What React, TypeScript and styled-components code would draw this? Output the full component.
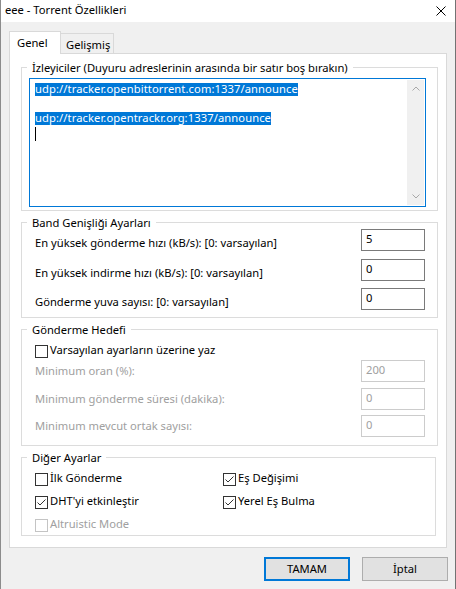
import React from "react";
import styled, { createGlobalStyle, css } from "styled-components";

const FONT = `"Noto Sans", "Open Sans", sans-serif`;

const GlobalStyle = createGlobalStyle`
  * { box-sizing: border-box; }
  html, body { margin: 0; padding: 0; background: #f0f0f0; }
  body { font-family: ${FONT}; font-size: 11.2px; color: #000; }
`;

const Window = styled.div`
  width: 456px;
  height: 589px;
  display: flex;
  flex-direction: column;
  background: #f0f0f0;
  border-left: 1px solid #8c8c8c;
  border-right: 1px solid #737373;
  overflow: hidden;
`;

const TitleBar = styled.div`
  height: 22px;
  flex: none;
  background: #fff;
  display: flex;
  align-items: flex-start;
  justify-content: space-between;
  padding: 2px 9px 0 4px;
`;

const Title = styled.div`
  line-height: 15px;
  white-space: nowrap;
`;

const CloseIcon = styled.svg`
  width: 10px;
  height: 10px;
  margin-top: 4px;
  display: block;
`;

const Body = styled.div`
  display: flex;
  flex-direction: column;
  padding: 9px 8px 0 8px;
`;

const TabRow = styled.div`
  display: flex;
  align-items: flex-end;
  height: 22px;
  position: relative;
  z-index: 1;
`;

const Tab = styled.div<{ $active?: boolean }>`
  line-height: 15px;
  white-space: nowrap;
  display: flex;
  align-items: center;
  ${(p) =>
    p.$active
      ? css`
          width: 52px;
          height: 23px;
          margin-bottom: -1px;
          padding: 0 0 1px 7px;
          background: #fff;
          border: 1px solid #d9d9d9;
          border-bottom: none;
        `
      : css`
          width: 53px;
          height: 20px;
          padding: 1px 0 0 5px;
          background: #f0f0f0;
          border: 1px solid #d9d9d9;
          border-left: none;
          border-bottom: none;
        `}
`;

const Panel = styled.div`
  height: 495px;
  background: #fff;
  border: 1px solid #d9d9d9;
  padding: 13px 8px 0 11px;
  display: flex;
  flex-direction: column;
  gap: 11px;
`;

const Group = styled.div<{ $pad: string; $inset?: number }>`
  position: relative;
  border: 1px solid #dcdcdc;
  padding: ${(p) => p.$pad};
  margin-right: ${(p) => p.$inset ?? 0}px;
`;

const Legend = styled.span`
  position: absolute;
  top: -8px;
  left: 5px;
  padding: 0 5px;
  background: #fff;
  line-height: 15px;
  white-space: nowrap;
`;

const TrackerBox = styled.div`
  height: 129px;
  border: 1px solid #0078d7;
  padding: 1px;
  display: flex;
  background: #fff;
`;

const TrackerText = styled.div`
  flex: 1;
  padding: 3px 0 0 4px;
`;

const TrackerLine = styled.div`
  height: 14.5px;
  display: flex;
  align-items: flex-start;
`;

const Selected = styled.span`
  background: #0078d7;
  color: #fff;
  height: 13px;
  line-height: 11px;
  padding-bottom: 2px;
  letter-spacing: 0.09px;
  white-space: nowrap;
`;

const Caret = styled.span`
  width: 1px;
  height: 14px;
  margin-top: 0.5px;
  background: #000;
`;

const ScrollBar = styled.div`
  width: 17px;
  background: #f0f0f0;
  display: flex;
  flex-direction: column;
  justify-content: space-between;
`;

const ScrollArrow = styled.div`
  height: 17px;
  display: flex;
  align-items: center;
  justify-content: center;
`;

const Fields = styled.div<{ $gap: number; $top?: number }>`
  display: flex;
  flex-direction: column;
  gap: ${(p) => p.$gap}px;
  margin-top: ${(p) => p.$top ?? 0}px;
`;

const FieldRow = styled.div`
  display: flex;
  align-items: flex-start;
  height: 22px;
`;

const FieldLabel = styled.span<{ $disabled?: boolean; $drop: number }>`
  flex: 1;
  line-height: 15px;
  margin-top: ${(p) => p.$drop}px;
  color: ${(p) => (p.$disabled ? "#a0a0a0" : "#000")};
  white-space: nowrap;
`;

const NumberBox = styled.div<{ $disabled?: boolean }>`
  width: 64px;
  height: 22px;
  border: 1px solid ${(p) => (p.$disabled ? "#cccccc" : "#7a7a7a")};
  background: #fff;
  padding: 0 4px 2px;
  line-height: 18px;
  color: ${(p) => (p.$disabled ? "#a0a0a0" : "#000")};
`;

const CheckRow = styled.div<{ $disabled?: boolean }>`
  display: flex;
  align-items: flex-start;
  gap: 2px;
  height: 15px;
  line-height: 15px;
  white-space: nowrap;
  color: ${(p) => (p.$disabled ? "#a0a0a0" : "#000")};
`;

const Box = styled.span<{ $disabled?: boolean }>`
  width: 13px;
  height: 13px;
  margin-top: 3px;
  flex: none;
  border: 1px solid ${(p) => (p.$disabled ? "#c4c4c4" : "#333333")};
  background: #fff;
  display: flex;
  align-items: center;
  justify-content: center;
`;

const CheckGrid = styled.div`
  display: grid;
  grid-template-columns: 188px auto;
  row-gap: 8px;
`;

const ButtonRow = styled.div`
  display: flex;
  justify-content: flex-end;
  gap: 12px;
  margin-top: 9px;
  margin-right: -1px;
`;

const Button = styled.div<{ $default?: boolean }>`
  width: 86px;
  height: 24px;
  background: #e1e1e1;
  border: ${(p) => (p.$default ? "2px solid #0078d7" : "1px solid #adadad")};
  display: flex;
  align-items: center;
  justify-content: center;
  line-height: 15px;
  padding-bottom: 1px;
`;

const Check: React.FC<{ checked?: boolean; disabled?: boolean; label: string }> = ({
  checked,
  disabled,
  label,
}) => (
  <CheckRow $disabled={disabled}>
    <Box $disabled={disabled}>
      {checked && (
        <svg width="11" height="11" viewBox="0 0 11 11">
          <polyline points="1.5,5.5 4,8 9.5,2.5" fill="none" stroke="#333" strokeWidth="1" />
        </svg>
      )}
    </Box>
    <span>{label}</span>
  </CheckRow>
);

const Field: React.FC<{ label: string; value: string; disabled?: boolean; drop: number }> = ({
  label,
  value,
  disabled,
  drop,
}) => (
  <FieldRow>
    <FieldLabel $disabled={disabled} $drop={drop}>
      {label}
    </FieldLabel>
    <NumberBox $disabled={disabled}>{value}</NumberBox>
  </FieldRow>
);

const Chevron: React.FC<{ down?: boolean }> = ({ down }) => (
  <svg width="8" height="5" viewBox="0 0 8 5">
    <polyline
      points={down ? "0.5,0.5 4,4 7.5,0.5" : "0.5,4.5 4,1 7.5,4.5"}
      fill="none"
      stroke="#a8a8a8"
      strokeWidth="1"
    />
  </svg>
);

export default function App() {
  return (
    <>
      <GlobalStyle />
      <Window>
        <TitleBar>
          <Title>eee - Torrent Özellikleri</Title>
          <CloseIcon viewBox="0 0 10 10">
            <line x1="0.5" y1="0.5" x2="9.5" y2="9.5" stroke="#000" strokeWidth="1" />
            <line x1="9.5" y1="0.5" x2="0.5" y2="9.5" stroke="#000" strokeWidth="1" />
          </CloseIcon>
        </TitleBar>
        <Body>
          <TabRow>
            <Tab $active>Genel</Tab>
            <Tab>Gelişmiş</Tab>
          </TabRow>
          <Panel>
            <Group $pad="10px 11px 3px 7px">
              <Legend>İzleyiciler (Duyuru adreslerinin arasında bir satır boş bırakın)</Legend>
              <TrackerBox>
                <TrackerText>
                  <TrackerLine>
                    <Selected>udp://tracker.openbittorrent.com:1337/announce</Selected>
                  </TrackerLine>
                  <TrackerLine />
                  <TrackerLine>
                    <Selected>udp://tracker.opentrackr.org:1337/announce</Selected>
                  </TrackerLine>
                  <TrackerLine>
                    <Caret />
                  </TrackerLine>
                </TrackerText>
                <ScrollBar>
                  <ScrollArrow>
                    <Chevron />
                  </ScrollArrow>
                  <ScrollArrow>
                    <Chevron down />
                  </ScrollArrow>
                </ScrollBar>
              </TrackerBox>
            </Group>

            <Group $pad="6px 12px 7px 13px">
              <Legend>Band Genişliği Ayarları</Legend>
              <Fields $gap={7.5}>
                <Field drop={6} label="En yüksek gönderme hızı (kB/s): [0: varsayılan]" value="5" />
                <Field drop={6} label="En yüksek indirme hızı (kB/s): [0: varsayılan]" value="0" />
                <Field drop={6} label="Gönderme yuva sayısı: [0: varsayılan]" value="0" />
              </Fields>
            </Group>

            <Group $pad="12px 12px 8px 13px">
              <Legend>Gönderme Hedefi</Legend>
              <Check label="Varsayılan ayarların üzerine yaz" />
              <Fields $gap={5.5} $top={3}>
                <Field drop={3} disabled label="Minimum oran (%):" value="200" />
                <Field drop={3} disabled label="Minimum gönderme süresi (dakika):" value="0" />
                <Field drop={3} disabled label="Minimum mevcut ortak sayısı:" value="0" />
              </Fields>
            </Group>

            <Group $pad="12px 0 4px 13px" $inset={2}>
              <Legend>Diğer Ayarlar</Legend>
              <CheckGrid>
                <Check label="İlk Gönderme" />
                <Check checked label="Eş Değişimi" />
                <Check checked label="DHT'yi etkinleştir" />
                <Check checked label="Yerel Eş Bulma" />
                <Check disabled label="Altruistic Mode" />
              </CheckGrid>
            </Group>
          </Panel>
          <ButtonRow>
            <Button $default>TAMAM</Button>
            <Button>İptal</Button>
          </ButtonRow>
        </Body>
      </Window>
    </>
  );
}
